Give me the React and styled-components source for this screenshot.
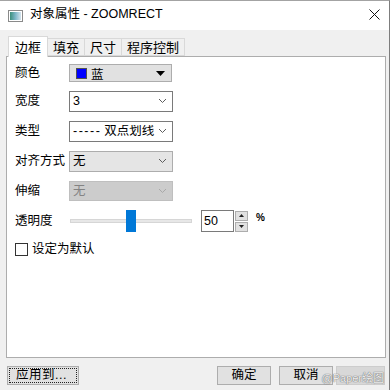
import React from 'react'
import styled, { createGlobalStyle } from 'styled-components'

const GlobalStyle = createGlobalStyle`
  html, body {
    margin: 0;
    padding: 0;
    background: #ffffff;
  }
  * { box-sizing: border-box; }
  body {
    font-family: 'Liberation Sans', 'Noto Sans CJK SC', sans-serif;
    font-size: 12px;
    color: #000;
  }
`

const Window = styled.div`
  position: relative;
  width: 390px;
  height: 390px;
  display: flex;
  flex-direction: column;
  background: #f0f0f0;
  border-top: 1px solid #a3a3a3;
  border-right: 1px solid #7d7d7d;
  overflow: hidden;
`

const BehindMark = styled.span`
  position: absolute;
  top: -1px;
  left: 203px;
  width: 8px;
  height: 1px;
  background: #8e1c1c;
`

const TitleBar = styled.div`
  height: 29px;
  flex: none;
  background: #fff;
  display: flex;
  align-items: center;
  padding: 0 9px 0 8px;
  gap: 7px;
`

const Title = styled.span`
  font-size: 12.5px;
  line-height: 1;
  padding-bottom: 2px;
`

const CloseBox = styled.span`
  margin-left: auto;
  display: flex;
  padding-bottom: 2px;
`

const Body = styled.div`
  flex: 1;
  display: flex;
  flex-direction: column;
  padding: 6px 3px 0 6px;
  min-height: 0;
`

const TabStrip = styled.div`
  display: flex;
  align-items: flex-end;
  height: 20px;
  padding-left: 2px;
  position: relative;
  z-index: 1;
`

const Tab = styled.div`
  height: ${p => (p.$active ? '21px' : '18px')};
  margin-bottom: ${p => (p.$active ? '-1px' : '0')};
  padding: 0 ${p => p.$pad}px;
  display: flex;
  align-items: center;
  font-size: 13px;
  background: ${p => (p.$active ? '#fff' : '#f0f0f0')};
  border: 1px solid #d9d9d9;
  border-bottom: ${p => (p.$active ? 'none' : '1px solid #d9d9d9')};
  margin-left: ${p => (p.$first ? '0' : '-1px')};
  line-height: 1;
`

const Panel = styled.div`
  flex: 1;
  background: #fff;
  border: 1px solid #adadad;
  padding: 5px 8px 0 8px;
  display: flex;
  flex-direction: column;
`

const Row = styled.div`
  display: flex;
  align-items: center;
  height: 22px;
  margin-bottom: ${p => p.$gap}px;
`

const Label = styled.span`
  width: 54px;
  flex: none;
  font-size: 12.5px;
  line-height: 1;
`

const ColorCombo = styled.div`
  width: 103px;
  height: 18px;
  background: #e1e1e1;
  border: 1px solid #adadad;
  display: flex;
  align-items: center;
  padding: 0 6px 0 7px;
  gap: 5px;
  font-size: 12.5px;
`

const Swatch = styled.span`
  width: 9px;
  height: 9px;
  background: ${p => p.$color};
  outline: 1px solid #505050;
`

const Select = styled.div`
  width: 104px;
  height: ${p => (p.$h ? p.$h : 21)}px;
  border: 1px solid ${p => (p.$disabled ? '#bfbfbf' : p.$readonly ? '#adadad' : '#7a7a7a')};
  background: ${p => (p.$disabled ? '#cccccc' : p.$readonly ? '#e5e5e5' : '#fff')};
  color: ${p => (p.$disabled ? '#838383' : '#000')};
  display: flex;
  align-items: center;
  padding: 0 5px 0 3px;
  font-size: 12.5px;
  overflow: hidden;
`

const SelectText = styled.span`
  flex: 1;
  white-space: nowrap;
  overflow: hidden;
  line-height: 1;
`

const Dashes = styled.span`
  letter-spacing: 1.5px;
  margin-right: 3px;
`

const Chevron = ({ color = '#5d5d5d' }) => (
  <svg width="9" height="6" viewBox="0 0 9 6" style={{ flex: 'none', marginLeft: 3 }}>
    <polyline points="1,1 4.5,4.5 8,1" fill="none" stroke={color} strokeWidth="1" />
  </svg>
)

const Slider = styled.div`
  position: relative;
  width: 122px;
  height: 22px;
  margin-left: 1px;
  display: flex;
  align-items: center;
`

const Track = styled.div`
  width: 100%;
  height: 4px;
  background: #e7e7e7;
  border: 1px solid #d6d6d6;
`

const Thumb = styled.div`
  position: absolute;
  top: 0;
  left: 56px;
  width: 10px;
  height: 22px;
  background: #0078d7;
`

const SpinInput = styled.div`
  margin-left: 9px;
  width: 33px;
  height: 22px;
  border: 1px solid #7a7a7a;
  background: #fff;
  display: flex;
  align-items: center;
  padding-left: 2px;
  font-size: 12.5px;
`

const SpinButtons = styled.div`
  display: flex;
  flex-direction: column;
  gap: 1px;
  margin-left: 1px;
`

const SpinBtn = styled.div`
  width: 13px;
  height: 10px;
  background: #e1e1e1;
  border: 1px solid #adadad;
  display: flex;
  align-items: center;
  justify-content: center;
`

const Percent = styled.span`
  margin-left: 8px;
  font-size: 10px;
  font-weight: bold;
  align-self: flex-start;
  margin-top: 2px;
`

const CheckRow = styled.label`
  display: flex;
  align-items: center;
  gap: 4px;
  margin-top: 11px;
  font-size: 12.5px;
  line-height: 1;
`

const CheckBox = styled.span`
  width: 13px;
  height: 13px;
  border: 1px solid #333;
  background: #fff;
`

const Footer = styled.div`
  position: relative;
  display: flex;
  align-items: center;
  height: 19px;
  margin: 8px 4px 5px 7px;
  gap: 8px;
`

const Button = styled.div`
  width: ${p => p.$w}px;
  height: 19px;
  flex: none;
  background: ${p => (p.$ghost ? '#d8d8d8' : '#e1e1e1')};
  border: 1px solid ${p => (p.$ghost ? '#cdcdcd' : '#adadad')};
  display: flex;
  align-items: center;
  justify-content: ${p => (p.$left ? 'flex-start' : 'center')};
  font-size: 12.5px;
  line-height: 1;
  padding: 1px;
  margin-left: ${p => (p.$push ? 'auto' : p.$tight ? '-5px' : '0')};
`

const FocusRing = styled.span`
  flex: 1;
  align-self: stretch;
  border: 1px dotted #222;
  display: flex;
  align-items: center;
  padding-left: 6px;
  letter-spacing: 0.5px;
`

const Watermark = styled.span`
  position: absolute;
  right: 1px;
  top: 3px;
  font-size: 11px;
  color: rgba(255, 255, 255, 0.9);
  text-shadow: 0 0 1px #6a6a6a, 0 0 1px #6a6a6a;
  white-space: nowrap;
  pointer-events: none;
`

const WindowIcon = () => (
  <svg width="15" height="12" viewBox="0 0 15 12">
    <defs>
      <linearGradient id="wg" x1="0" y1="0" x2="1" y2="0">
        <stop offset="0" stopColor="#3b8f7b" />
        <stop offset="0.5" stopColor="#7fb7c9" />
        <stop offset="1" stopColor="#d5e4ee" />
      </linearGradient>
    </defs>
    <rect x="0.5" y="0.5" width="14" height="11" fill="#fff" stroke="#8a8a8a" />
    <rect x="2" y="2" width="11" height="8" fill="url(#wg)" />
  </svg>
)

const CloseIcon = () => (
  <svg width="11" height="11" viewBox="0 0 11 11">
    <path d="M0.5 0.5 L10.5 10.5 M10.5 0.5 L0.5 10.5" stroke="#111" strokeWidth="1" />
  </svg>
)

const DownTriangle = () => (
  <svg width="9" height="5" viewBox="0 0 9 5" style={{ marginLeft: 'auto' }}>
    <polygon points="0,0 9,0 4.5,5" fill="#000" />
  </svg>
)

const SmallArrow = ({ up }) => (
  <svg width="5" height="3" viewBox="0 0 5 3">
    <polygon points={up ? '0,3 5,3 2.5,0' : '0,0 5,0 2.5,3'} fill="#222" />
  </svg>
)

export default function App() {
  const tabs = [
    { name: '边框', pad: 6 },
    { name: '填充', pad: 5 },
    { name: '尺寸', pad: 5 },
    { name: '程序控制', pad: 5 },
  ]

  return (
    <>
      <GlobalStyle />
      <Window>
        <BehindMark />
        <TitleBar>
          <WindowIcon />
          <Title>对象属性 - ZOOMRECT</Title>
          <CloseBox><CloseIcon /></CloseBox>
        </TitleBar>

        <Body>
          <TabStrip>
            {tabs.map((t, i) => (
              <Tab key={t.name} $active={i === 0} $first={i === 0} $pad={t.pad}>{t.name}</Tab>
            ))}
          </TabStrip>

          <Panel>
            <Row $gap={6}>
              <Label>颜色</Label>
              <ColorCombo>
                <Swatch $color="#0000ff" />
                <span>蓝</span>
                <DownTriangle />
              </ColorCombo>
            </Row>

            <Row $gap={8}>
              <Label>宽度</Label>
              <Select>
                <SelectText>3</SelectText>
                <Chevron />
              </Select>
            </Row>

            <Row $gap={8}>
              <Label>类型</Label>
              <Select>
                <SelectText><Dashes>-----</Dashes>双点划线</SelectText>
                <Chevron />
              </Select>
            </Row>

            <Row $gap={8}>
              <Label>对齐方式</Label>
              <Select $readonly>
                <SelectText>无</SelectText>
                <Chevron />
              </Select>
            </Row>

            <Row $gap={8}>
              <Label>伸缩</Label>
              <Select $disabled $h={20}>
                <SelectText>无</SelectText>
                <Chevron color="#a8a8a8" />
              </Select>
            </Row>

            <Row $gap={0}>
              <Label>透明度</Label>
              <Slider>
                <Track />
                <Thumb />
              </Slider>
              <SpinInput>50</SpinInput>
              <SpinButtons>
                <SpinBtn><SmallArrow up /></SpinBtn>
                <SpinBtn><SmallArrow /></SpinBtn>
              </SpinButtons>
              <Percent>%</Percent>
            </Row>

            <CheckRow>
              <CheckBox />
              设定为默认
            </CheckRow>
          </Panel>
        </Body>

        <Footer>
          <Button $w={72} $left>
            <FocusRing>应用到...</FocusRing>
          </Button>
          <Button $w={54} $push>确定</Button>
          <Button $w={54}>取消</Button>
          <Button $w={49} $ghost $tight />
          <Watermark>@Paper绘图</Watermark>
        </Footer>
      </Window>
    </>
  )
}
